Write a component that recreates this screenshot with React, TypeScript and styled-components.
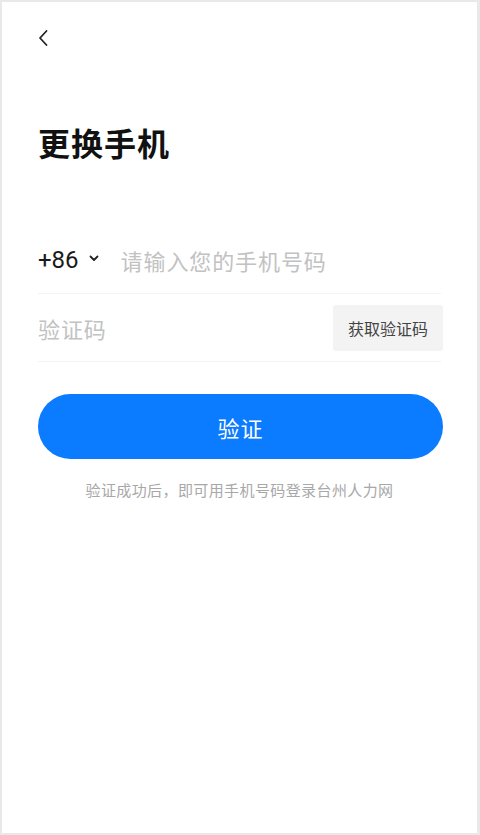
import styled, { createGlobalStyle } from "styled-components";

const GlobalStyle = createGlobalStyle`
  html, body {
    margin: 0;
    padding: 0;
    background: #ffffff;
  }
  body {
    font-family: "Noto Sans CJK SC", "Noto Sans", sans-serif;
  }
`;

const Frame = styled.div`
  box-sizing: border-box;
  width: 480px;
  height: 835px;
  border: 2px solid #e9e9e9;
  border-right-width: 3px;
  background: #fff;
  padding: 0 36px 0 36px;
  display: flex;
  flex-direction: column;
`;

const BackBar = styled.div`
  height: 72px;
  display: flex;
  align-items: center;
  padding-bottom: 2px;
`;

const BackIcon = styled.svg`
  width: 12px;
  height: 18px;
  margin-left: -1px;
`;

const Title = styled.h1`
  margin: 43px 0 0 0;
  font-size: 32px;
  line-height: 46px;
  font-weight: 700;
  color: #111;
  letter-spacing: 1px;
`;

const Form = styled.div`
  margin-top: 61px;
  display: flex;
  flex-direction: column;
`;

const Row = styled.div`
  height: 67px;
  display: flex;
  align-items: center;
  border-bottom: 1px solid #f3f3f3;
`;

const CountryCode = styled.div`
  display: flex;
  align-items: center;
  font-family: "Roboto", "Noto Sans", sans-serif;
  font-size: 24px;
  color: #1a1a1a;
  margin-right: 22px;
`;

const Chevron = styled.svg`
  width: 10px;
  height: 7px;
  margin-left: 10px;
  margin-top: -3px;
`;

const Placeholder = styled.div`
  flex: 1;
  font-size: 22px;
  color: #c2c2c2;
  letter-spacing: 0.9px;
`;

const CodeButton = styled.div`
  width: 110px;
  height: 46px;
  background: #f3f3f3;
  border-radius: 3px;
  display: flex;
  align-items: center;
  justify-content: center;
  font-size: 16px;
  color: #444;
  margin-right: -2px;
`;

const SubmitButton = styled.div`
  margin-top: 32px;
  height: 65px;
  border-radius: 33px;
  background: #0b7bff;
  color: #fff;
  font-size: 22px;
  display: flex;
  align-items: center;
  justify-content: center;
  letter-spacing: 1px;
  margin-right: -2px;
`;

const Hint = styled.p`
  margin: 20px 0 0 0;
  text-align: center;
  font-size: 15px;
  color: #a8a8a8;
  letter-spacing: 0.4px;
`;

export default function App() {
  return (
    <>
      <GlobalStyle />
      <Frame>
        <BackBar>
          <BackIcon viewBox="0 0 12 18">
            <path
              d="M9.5 2 L3 9 L9.5 16"
              fill="none"
              stroke="#222"
              strokeWidth="1.8"
              strokeLinecap="round"
              strokeLinejoin="round"
            />
          </BackIcon>
        </BackBar>
        <Title>更换手机</Title>
        <Form>
          <Row>
            <CountryCode>
              +86
              <Chevron viewBox="0 0 10 7">
                <path
                  d="M1.5 1.5 L5 5 L8.5 1.5"
                  fill="none"
                  stroke="#222"
                  strokeWidth="1.8"
                  strokeLinecap="round"
                  strokeLinejoin="round"
                />
              </Chevron>
            </CountryCode>
            <Placeholder>请输入您的手机号码</Placeholder>
          </Row>
          <Row>
            <Placeholder>验证码</Placeholder>
            <CodeButton>获取验证码</CodeButton>
          </Row>
        </Form>
        <SubmitButton>验证</SubmitButton>
        <Hint>验证成功后，即可用手机号码登录台州人力网</Hint>
      </Frame>
    </>
  );
}
